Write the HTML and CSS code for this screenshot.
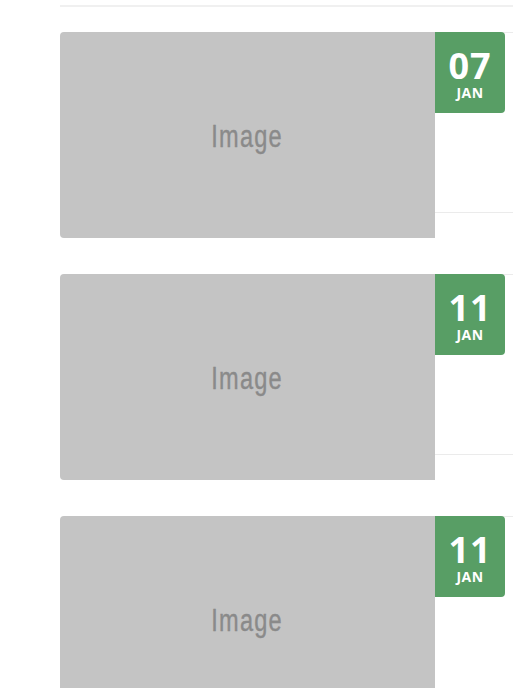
FILE: index.html
```html
<!DOCTYPE html>
<html lang="en">
<head>
<meta charset="utf-8">
<title>Events</title>
<link rel="stylesheet" href="styles.css">
</head>
<body>
<div class="page">
  <div class="top-rule"></div>
  <ul class="events">
    <li class="event">
      <div class="thumb"><span class="thumb-label">Image</span></div>
      <div class="info">
        <div class="info-body"></div>
        <div class="info-foot"></div>
      </div>
      <div class="date"><span class="day">07</span><span class="month">JAN</span></div>
    </li>
    <li class="event">
      <div class="thumb"><span class="thumb-label">Image</span></div>
      <div class="info">
        <div class="info-body"></div>
        <div class="info-foot"></div>
      </div>
      <div class="date"><span class="day">11</span><span class="month">JAN</span></div>
    </li>
    <li class="event">
      <div class="thumb"><span class="thumb-label">Image</span></div>
      <div class="info">
        <div class="info-body"></div>
        <div class="info-foot"></div>
      </div>
      <div class="date"><span class="day">11</span><span class="month">JAN</span></div>
    </li>
  </ul>
</div>
</body>
</html>
```

FILE: styles.css
```css
html, body {
  margin: 0;
  padding: 0;
  background: #ffffff;
  overflow: hidden;
}

.page {
  width: 900px;
  padding-left: 60px;
  padding-top: 5px;
}

.top-rule {
  height: 0;
  border-top: 2px solid #f0f0f0;
}

.events {
  list-style: none;
  margin: 25px 0 0 0;
  padding: 0;
  display: flex;
  flex-direction: column;
  gap: 36px;
}

.event {
  position: relative;
  display: flex;
  height: 206px;
}

.thumb {
  width: 375px;
  flex: 0 0 375px;
  background: #c4c4c4;
  border-radius: 4px 0 0 4px;
  display: flex;
  align-items: center;
  justify-content: center;
}

.thumb-label {
  font-family: "Liberation Sans", Arial, sans-serif;
  font-size: 31px;
  color: #8a8a8a;
  letter-spacing: 1.6px;
  transform: scaleX(0.76);
  -webkit-text-stroke: 0.4px #8a8a8a;
  margin-top: 4px;
}

.info {
  flex: 1;
  display: flex;
  flex-direction: column;
  border-top: 1px solid #ebebeb;
}

.info-body {
  height: 179px;
}

.info-foot {
  flex: 1;
  border-top: 1px solid #ebebeb;
}

.date {
  position: absolute;
  top: 0;
  left: 375px;
  width: 70px;
  height: 81px;
  background: #589e65;
  border-radius: 0 4px 4px 0;
  color: #ffffff;
  font-family: "Open Sans", "Liberation Sans", sans-serif;
  font-weight: 700;
  display: flex;
  flex-direction: column;
  align-items: center;
  padding-top: 16px;
  box-sizing: border-box;
}

.day {
  font-size: 36px;
  line-height: 36px;
  letter-spacing: 1px;
}

.month {
  font-size: 14px;
  line-height: 14px;
  margin-top: 2px;
  letter-spacing: 0.5px;
}
```
